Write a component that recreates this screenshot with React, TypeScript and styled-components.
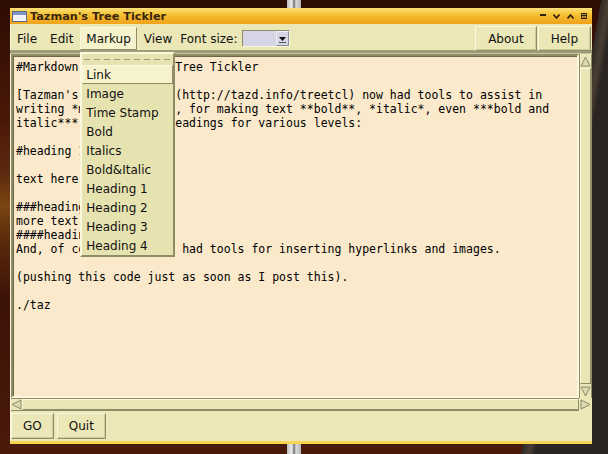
import React from "react";
import styled, { createGlobalStyle } from "styled-components";

const Global = createGlobalStyle`
  html, body { margin: 0; padding: 0; }
  body { width: 608px; height: 454px; overflow: hidden; background: #3d1409; }
`;

const SANS = `"DejaVu Sans", "Liberation Sans", sans-serif`;
const MONO = `"DejaVu Sans Mono", "Liberation Mono", monospace`;

const C = {
  bar: "#ebe7b7",
  menu: "#e7e3b0",
  hi: "#f6f2cb",
  light: "#fbf8de",
  dark: "#8f8c68",
  darker: "#6d6a4c",
  paper: "#fae9cb",
  ink: "#111",
};

const Desktop = styled.div`
  width: 608px;
  height: 454px;
  box-sizing: border-box;
  padding: 8px 16px 10px 10px;
  display: flex;
  background:
    linear-gradient(to right, transparent 287px, #bdbdbd 287px, #ececec 292px, #707070 294px, #dadada 296px, #b5b5b5 301px, transparent 301px),
    linear-gradient(100deg, transparent 592px, #2f2a26 592px, #4a3e33 600px, #2a2522 606px),
    linear-gradient(#2e0c04, #4a1808 120px, #5c2a0e 175px, #7a4612 205px, #5a2a0c 240px, #3d1208 300px, #4a1a0a 454px);
`;

const Window = styled.div`
  flex: 1;
  display: flex;
  flex-direction: column;
  background: ${C.bar};
  border-bottom: 3px solid #f7d452;
  box-shadow: inset 1px 0 0 ${C.light};
`;

const TitleBar = styled.div`
  height: 16px;
  display: flex;
  align-items: center;
  padding: 0 5px 0 2px;
  background: linear-gradient(#fde27a, #f7c63a 35%, #f2ac22 75%, #f0a41e);
  font: bold 11.3px ${SANS};
  color: #3a2608;
`;

const Title = styled.span`
  margin-left: 3px;
  flex: 1;
`;

const WinControls = styled.div`
  display: flex;
  gap: 7px;
  align-items: center;
`;

const MenuBar = styled.div`
  height: 26px;
  display: flex;
  align-items: flex-end;
  gap: 1px;
  padding: 0 1px 0 1px;
  font: 12px ${SANS};
  color: ${C.ink};
  position: relative;
`;

const MenuButton = styled.div<{ $active?: boolean }>`
  height: 23px;
  box-sizing: border-box;
  padding: 0 5px;
  display: flex;
  align-items: center;
  border: 1px solid ${(p) => (p.$active ? C.light : "transparent")};
  border-right-color: ${(p) => (p.$active ? C.dark : "transparent")};
  border-bottom-color: ${(p) => (p.$active ? C.dark : "transparent")};
  background: ${(p) => (p.$active ? C.hi : "transparent")};
  position: relative;
`;

const FontLabel = styled.span`
  height: 23px;
  display: flex;
  align-items: center;
  margin-left: 1px;
`;

const Combo = styled.div`
  width: 48px;
  height: 17px;
  box-sizing: border-box;
  margin: 0 0 3px 3px;
  border: 1px solid ${C.dark};
  border-right-color: ${C.light};
  border-bottom-color: ${C.light};
  background: #d5d5e5;
  display: flex;
  justify-content: flex-end;
`;

const ComboArrow = styled.div`
  width: 13px;
  box-sizing: border-box;
  border: 1px solid #f0f0f8;
  border-right-color: #8a8aa0;
  border-bottom-color: #8a8aa0;
  display: flex;
  align-items: center;
  justify-content: center;
  padding-top: 2px;
`;

const Spacer = styled.div`
  flex: 1;
`;

const RaisedButton = styled.div`
  height: 25px;
  box-sizing: border-box;
  padding: 0 12px;
  display: flex;
  align-items: center;
  background: ${C.bar};
  border: 1px solid ${C.light};
  border-right-color: ${C.dark};
  border-bottom-color: ${C.dark};
  box-shadow: inset -1px -1px 0 #cfcb9c;
  font: 12px ${SANS};
  color: ${C.ink};
`;

const TopButton = styled(RaisedButton)`
  margin-bottom: -1px;
`;

const Divider = styled.div`
  height: 4px;
  background: linear-gradient(#a3a07e, #9b9875 75%, #c9c6a0 75%);
`;

const Editor = styled.div`
  height: 357px;
  display: grid;
  grid-template-columns: 1fr 13px;
  grid-template-rows: 1fr 13px;
  padding: 0 0 0 1px;
`;

const TextPane = styled.pre`
  margin: 0;
  box-sizing: border-box;
  border: 2px solid ${C.dark};
  border-right-color: ${C.light};
  border-bottom-color: ${C.light};
  box-shadow: inset 1px 1px 0 ${C.darker};
  background: ${C.paper};
  padding: 4px 3px 0 3px;
  font: 11.5px/14px ${MONO};
  color: #000;
  white-space: pre;
  overflow: hidden;
`;

const VScroll = styled.div`
  display: flex;
  flex-direction: column;
  background: ${C.bar};
  border-left: 1px solid ${C.dark};
  border-right: 1px solid ${C.dark};
`;

const Trough = styled.div`
  flex: 1;
  background: #e9e5b4;
  border: 1px solid ${C.light};
  border-right-color: ${C.dark};
  border-bottom-color: ${C.dark};
`;

const HScroll = styled.div`
  display: flex;
  background: ${C.bar};
  border-top: 1px solid ${C.dark};
  border-bottom: 1px solid ${C.dark};
`;

const ArrowBox = styled.div<{ $w?: number; $h?: number }>`
  width: ${(p) => (p.$w ? `${p.$w}px` : "auto")};
  height: ${(p) => (p.$h ? `${p.$h}px` : "auto")};
  flex: none;
  display: flex;
  align-items: center;
  justify-content: center;
`;

const Corner = styled.div`
  background: ${C.bar};
  display: flex;
  align-items: center;
  justify-content: center;
`;

const ButtonBar = styled.div`
  height: 30px;
  display: flex;
  align-items: center;
  gap: 3px;
  padding: 0 0 0 1px;
`;

const BottomButton = styled(RaisedButton)`
  height: 26px;
  padding: 0 11px;
`;

const DropMenu = styled.div`
  position: absolute;
  left: -1px;
  top: 24px;
  width: 95px;
  box-sizing: border-box;
  background: ${C.menu};
  border: 2px solid ${C.light};
  border-right-color: ${C.dark};
  border-bottom-color: ${C.dark};
  z-index: 5;
  font: 12px ${SANS};
  color: ${C.ink};
`;

const TearOff = styled.div`
  height: 11px;
  display: flex;
  align-items: center;
  padding: 0 2px;
  &::after {
    content: "";
    flex: 1;
    height: 1px;
    background: repeating-linear-gradient(to right, #9c9980 0 6px, transparent 6px 10px);
  }
`;

const MenuItem = styled.div<{ $active?: boolean }>`
  height: 19px;
  box-sizing: border-box;
  padding: 0 0 0 3px;
  display: flex;
  align-items: center;
  white-space: nowrap;
  background: ${(p) => (p.$active ? C.hi : "transparent")};
  border: 1px solid ${(p) => (p.$active ? C.light : "transparent")};
  border-right-color: ${(p) => (p.$active ? C.dark : "transparent")};
  border-bottom-color: ${(p) => (p.$active ? C.dark : "transparent")};
`;

const AppIcon = () => (
  <svg width="15" height="11" viewBox="0 0 15 11">
    <rect x="0.5" y="0.5" width="14" height="10" fill="#f4f4f8" stroke="#5a6a8a" />
    <rect x="1" y="1" width="13" height="3" fill="#7f96c4" />
  </svg>
);

const Triangle = ({ dir }: { dir: "up" | "down" | "left" | "right" }) => {
  const pts: Record<string, string> = {
    up: "5.5,1 1,10 10,10",
    down: "1,1 10,1 5.5,10",
    left: "1,5.5 10,1 10,10",
    right: "1,1 10,5.5 1,10",
  };
  return (
    <svg width="11" height="11" viewBox="0 0 11 11">
      <polygon points={pts[dir]} fill="#dedbb0" stroke="#8a876a" strokeWidth="1" />
    </svg>
  );
};

const text = `#Markdown for Tazman's Tree Tickler

[Tazman's Tree Tickler](http://tazd.info/treetcl) now had tools to assist in
writing *markdown* text, for making text **bold**, *italic*, even ***bold and
italic***, as well as headings for various levels:

#heading 1

text here

###heading 3
more text
####heading 4
And, of course, it also had tools for inserting hyperlinks and images.

(pushing this code just as soon as I post this).

./taz`;

const items = [
  "Link",
  "Image",
  "Time Stamp",
  "Bold",
  "Italics",
  "Bold&Italic",
  "Heading 1",
  "Heading 2",
  "Heading 3",
  "Heading 4",
];

export default function App() {
  return (
    <>
      <Global />
      <Desktop>
        <Window>
          <TitleBar>
            <AppIcon />
            <Title>Tazman's Tree Tickler</Title>
            <WinControls>
              <svg width="6" height="4" viewBox="0 0 6 4">
                <rect x="0" y="0" width="6" height="2" fill="#2e2008" />
              </svg>
              <svg width="7" height="5" viewBox="0 0 7 5">
                <polyline points="0.5,0.5 3.5,4 6.5,0.5" fill="none" stroke="#2e2008" strokeWidth="1.6" />
              </svg>
              <svg width="7" height="5" viewBox="0 0 7 5">
                <polyline points="0.5,4.5 3.5,1 6.5,4.5" fill="none" stroke="#2e2008" strokeWidth="1.6" />
              </svg>
              <svg width="6" height="6" viewBox="0 0 6 6">
                <rect x="0.5" y="0.5" width="5" height="5" fill="none" stroke="#2e2008" />
                <line x1="0" y1="2.5" x2="6" y2="2.5" stroke="#2e2008" />
                <line x1="3" y1="0" x2="3" y2="6" stroke="#2e2008" />
              </svg>
            </WinControls>
          </TitleBar>
          <MenuBar>
            <MenuButton>File</MenuButton>
            <MenuButton>Edit</MenuButton>
            <MenuButton $active>
              Markup
              <DropMenu>
                <TearOff />
                {items.map((it, i) => (
                  <MenuItem key={it} $active={i === 0}>
                    {it}
                  </MenuItem>
                ))}
              </DropMenu>
            </MenuButton>
            <MenuButton>View</MenuButton>
            <FontLabel>Font size:</FontLabel>
            <Combo>
              <ComboArrow>
                <svg width="7" height="6" viewBox="0 0 7 6">
                  <polygon points="0,0 7,0 3.5,4" fill="#111" />
                  <rect x="0" y="5" width="7" height="1" fill="#555" />
                </svg>
              </ComboArrow>
            </Combo>
            <Spacer />
            <TopButton>About</TopButton>
            <TopButton>Help</TopButton>
          </MenuBar>
          <Divider />
          <Editor>
            <TextPane>{text}</TextPane>
            <VScroll>
              <ArrowBox $h={14}>
                <Triangle dir="up" />
              </ArrowBox>
              <Trough />
              <ArrowBox $h={14}>
                <Triangle dir="down" />
              </ArrowBox>
            </VScroll>
            <HScroll>
              <ArrowBox $w={11}>
                <Triangle dir="left" />
              </ArrowBox>
              <Trough />
            </HScroll>
            <Corner>
              <Triangle dir="right" />
            </Corner>
          </Editor>
          <ButtonBar>
            <BottomButton>GO</BottomButton>
            <BottomButton>Quit</BottomButton>
          </ButtonBar>
        </Window>
      </Desktop>
    </>
  );
}
